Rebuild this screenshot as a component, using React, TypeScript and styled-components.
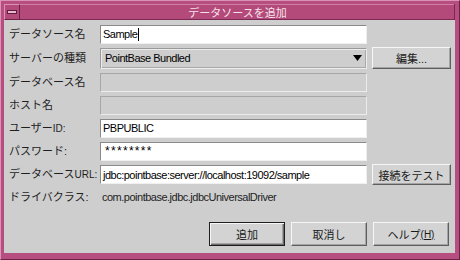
import React from "react";
import styled, { createGlobalStyle } from "styled-components";

const Global = createGlobalStyle`
  html, body { margin: 0; padding: 0; background: #cecece; }
  body { font-family: "Liberation Sans", "Noto Sans CJK JP", sans-serif; }
  * { box-sizing: border-box; }
`;

const Window = styled.div`
  width: 460px;
  height: 260px;
  background: #b64f80;
  padding: 3px 4px 6px 3px;
  border: 1px solid;
  border-color: #dc92b6 #6a2246 #6a2246 #dc92b6;
  display: flex;
  flex-direction: column;
`;

const TitleBar = styled.div`
  height: 16px;
  display: flex;
  background: #b34a7a;
  box-shadow: inset -1px -1px 0 #7a2a52, inset 1px 1px 0 #d07ea4;
`;

const MenuButton = styled.div`
  width: 16px;
  height: 16px;
  border: 1px solid;
  border-color: #dc92b6 #6a2246 #6a2246 #dc92b6;
  display: flex;
  align-items: center;
  justify-content: center;
`;

const MenuBar = styled.div`
  width: 10px;
  height: 4px;
  background: #e8b8ce;
  border: 1px solid #5e1c3e;
`;

const Title = styled.div`
  flex: 1;
  text-align: center;
  color: #f6e2ec;
  font-family: "Noto Sans CJK JP", sans-serif;
  font-size: 11px;
  line-height: 16px;
`;

const Content = styled.div`
  flex: 1;
  background: #cecece;
  padding: 4px 4px 7px 5px;
  display: flex;
  flex-direction: column;
`;

const Form = styled.div`
  display: grid;
  grid-template-columns: 86px 267px 79px;
  grid-template-rows: 20px 22px 20px 20px 20px 20px 21px 18px;
  column-gap: 5px;
  row-gap: 3px;
  align-items: center;
`;

const Label = styled.div`
  grid-column: 1;
  font-family: "Liberation Sans", "Noto Sans CJK JP", sans-serif;
  font-size: 11px;
  color: #1e1e1e;
  white-space: nowrap;
  line-height: 14px;
`;

const Latin = styled.span`
  font-size: 10px;
`;

const TextField = styled.div<{ $secret?: boolean }>`
  grid-column: 2;
  height: 19px;
  background: #ffffff;
  border: 1px solid;
  border-color: #8a8a8a #f0f0f0 #f0f0f0 #8a8a8a;
  padding-left: ${(p) => (p.$secret ? 4 : 2)}px;
  display: flex;
  align-items: center;
  font-size: ${(p) => (p.$secret ? 12 : 11)}px;
  letter-spacing: ${(p) => (p.$secret ? "1.3px" : "-0.5px")};
  color: #000;
  white-space: nowrap;
  overflow: hidden;
`;

const Cursor = styled.span`
  display: inline-block;
  width: 1px;
  height: 13px;
  background: #000;
  margin-left: 1px;
`;

const Disabled = styled.div`
  grid-column: 2;
  height: 19px;
  background: #cecece;
  border: 1px solid;
  border-color: #a6a6a6 #ececec #ececec #a6a6a6;
`;

const Combo = styled.div`
  grid-column: 2;
  height: 21px;
  background: #cecece;
  border: 1px solid;
  border-color: #9a9a9a #eeeeee #eeeeee #9a9a9a;
  box-shadow: inset 1px 1px 0 #ececec, inset -1px -1px 0 #a8a8a8;
  padding: 0 4px 0 4px;
  display: flex;
  align-items: center;
  justify-content: space-between;
  font-size: 11px;
  letter-spacing: -0.5px;
  color: #000;
`;

const Arrow = styled.svg`
  width: 9px;
  height: 6px;
`;

const Button = styled.div<{ $h?: number; $default?: boolean }>`
  width: ${(p) => (p.$default ? 76 : 79)}px;
  height: ${(p) => p.$h ?? 22}px;
  background: #d3d3d3;
  border: 1px solid;
  border-color: ${(p) =>
    p.$default ? "#1e1e1e" : "#f6f6f6 #5e5e5e #5e5e5e #f6f6f6"};
  box-shadow: ${(p) =>
    p.$default
      ? "inset 1px 1px 0 #f6f6f6, inset -1px -1px 0 #6a6a6a, inset -2px -2px 0 #a4a4a4"
      : "inset -1px -1px 0 #a4a4a4"};
  display: flex;
  align-items: center;
  justify-content: center;
  font-family: "Liberation Sans", "Noto Sans CJK JP", sans-serif;
  font-size: 11px;
  color: #1a1a1a;
  white-space: nowrap;
`;

const SideButton = styled(Button)`
  grid-column: 3;
`;

const DriverText = styled.div`
  grid-column: 2 / span 2;
  padding-left: 2px;
  font-size: 11px;
  letter-spacing: -0.5px;
  color: #1e1e1e;
`;

const Spacer = styled.div`
  flex: 1;
`;

const ButtonRow = styled.div`
  display: flex;
  justify-content: flex-end;
  gap: 6px;
  margin-right: 2px;
`;

const BottomButton = styled(Button)`
  width: 76px;
`;

const Mnemonic = styled.span`
  font-size: 10px;
  text-decoration: underline;
`;

export default function App() {
  return (
    <>
      <Global />
      <Window>
        <TitleBar>
          <MenuButton>
            <MenuBar />
          </MenuButton>
          <Title>データソースを追加</Title>
        </TitleBar>
        <Content>
          <Form>
            <Label>データソース名</Label>
            <TextField>
              Sample
              <Cursor />
            </TextField>
            <div />

            <Label>サーバーの種類</Label>
            <Combo>
              <span>PointBase Bundled</span>
              <Arrow viewBox="0 0 9 6">
                <polygon points="0,0 9,0 4.5,6" fill="#000" />
              </Arrow>
            </Combo>
            <SideButton>編集...</SideButton>

            <Label>データベース名</Label>
            <Disabled />
            <div />

            <Label>ホスト名</Label>
            <Disabled />
            <div />

            <Label>
              ユーザー<Latin>ID:</Latin>
            </Label>
            <TextField>PBPUBLIC</TextField>
            <div />

            <Label>パスワード:</Label>
            <TextField $secret>********</TextField>
            <div />

            <Label>
              データベース<Latin>URL:</Latin>
            </Label>
            <TextField>jdbc:pointbase:server://localhost:19092/sample</TextField>
            <SideButton $h={21}>接続をテスト</SideButton>

            <Label>ドライバクラス:</Label>
            <DriverText>com.pointbase.jdbc.jdbcUniversalDriver</DriverText>
          </Form>
          <Spacer />
          <ButtonRow>
            <BottomButton $h={24} $default>
              追加
            </BottomButton>
            <BottomButton $h={24}>取消し</BottomButton>
            <BottomButton $h={24}>
              ヘルプ<Mnemonic>(H)</Mnemonic>
            </BottomButton>
          </ButtonRow>
        </Content>
      </Window>
    </>
  );
}
